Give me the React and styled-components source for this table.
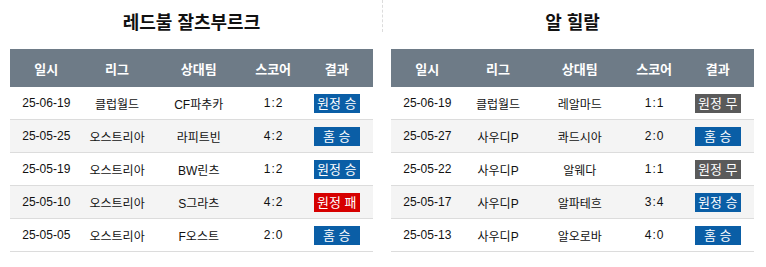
import React from 'react';
import styled, { createGlobalStyle } from 'styled-components';

const GlobalStyle = createGlobalStyle`
  html, body {
    margin: 0;
    padding: 0;
    background: #fff;
  }
  body {
    font-family: "Liberation Sans", Arial, "Noto Sans CJK KR", sans-serif;
    color: #111;
  }
`;

const teams = [
  {
    name: '레드불 잘츠부르크',
    rows: [
      ['25-06-19', '클럽월드', 'CF파추카', '1:2', '원정 승', 'win'],
      ['25-05-25', '오스트리아', '라피트빈', '4:2', '홈 승', 'win'],
      ['25-05-19', '오스트리아', 'BW린츠', '1:2', '원정 승', 'win'],
      ['25-05-10', '오스트리아', 'S그라츠', '4:2', '원정 패', 'lose'],
      ['25-05-05', '오스트리아', 'F오스트', '2:0', '홈 승', 'win'],
    ],
  },
  {
    name: '알 힐랄',
    rows: [
      ['25-06-19', '클럽월드', '레알마드', '1:1', '원정 무', 'draw'],
      ['25-05-27', '사우디P', '콰드시아', '2:0', '홈 승', 'win'],
      ['25-05-22', '사우디P', '알웨다', '1:1', '원정 무', 'draw'],
      ['25-05-17', '사우디P', '알파테흐', '3:4', '원정 승', 'win'],
      ['25-05-13', '사우디P', '알오로바', '4:0', '홈 승', 'win'],
    ],
  },
];

const heads = ['일시', '리그', '상대팀', '스코어', '결과'];
const widths = ['20%', '19%', '26%', '15%', '20%'];

export default function App() {
  return (
    <>
      <GlobalStyle />
      <Page>
        <TeamBlock team={teams[0]} />
        <Divider />
        <TeamBlock team={teams[1]} />
      </Page>
    </>
  );
}

function TeamBlock({ team }) {
  return (
    <Column>
      <Title>{team.name}</Title>
      <Table>
        <colgroup>
          {widths.map((w, i) => (
            <col key={i} style={{ width: w }} />
          ))}
        </colgroup>
        <thead>
          <tr>
            {heads.map((h) => (
              <Th key={h}>{h}</Th>
            ))}
          </tr>
        </thead>
        <tbody>
          {team.rows.map((r, i) => (
            <Row key={i} $alt={i % 2 === 1}>
              <Td>{r[0]}</Td>
              <Td>{r[1]}</Td>
              <Td>{r[2]}</Td>
              <Td>
                <Score>{r[3]}</Score>
              </Td>
              <Td>
                <Badge $kind={r[5]}>{r[4]}</Badge>
              </Td>
            </Row>
          ))}
        </tbody>
      </Table>
    </Column>
  );
}

// Styled Components
const Page = styled.div`
  display: flex;
  align-items: flex-start;
  width: 766px;
  padding-left: 10px;
  box-sizing: border-box;
`;

const Column = styled.div`
  width: 363px;
  flex-shrink: 0;
`;

const Divider = styled.div`
  width: 0;
  height: 32px;
  margin: 0 8px 0 9px;
  border-left: 1px dashed #dcdcdc;
`;

const Title = styled.h2`
  margin: 0 0 5px;
  padding-top: 2px;
  height: 42px;
  line-height: 42px;
  text-align: center;
  font-size: 18px;
  font-weight: bold;
  color: #111;
`;

const Table = styled.table`
  width: 100%;
  border-collapse: collapse;
  table-layout: fixed;
  font-size: 12px;
`;

const Th = styled.th`
  height: 38px;
  padding: 0;
  background: #6e7b87;
  color: #fff;
  font-size: 13px;
  font-weight: bold;
  text-align: center;
`;

const Row = styled.tr`
  background: ${(p) => (p.$alt ? '#f4f4f4' : '#fff')};
  border-bottom: 1px solid #dcdcdc;
`;

const Td = styled.td`
  height: 32px;
  padding: 0;
  text-align: center;
  color: #111;
`;

const Score = styled.span`
  letter-spacing: 1px;
  margin-right: -1px;
`;

const badgeColors = {
  win: '#0a5ea6',
  lose: '#d60000',
  draw: '#5a5a5a',
};

const Badge = styled.span`
  display: inline-block;
  width: 46px;
  height: 19px;
  line-height: 19px;
  vertical-align: middle;
  background: ${(p) => badgeColors[p.$kind]};
  color: #fff;
  font-size: 13px;
  text-align: center;
`;
